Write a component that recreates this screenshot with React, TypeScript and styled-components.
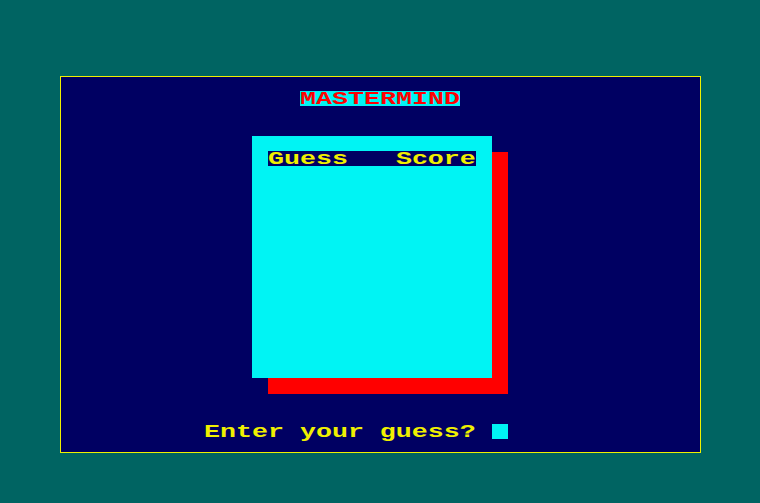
import React from 'react';
import styled, { createGlobalStyle } from 'styled-components';

const GlobalStyle = createGlobalStyle`
  html, body {
    margin: 0;
    padding: 0;
    background-color: #006462;
  }
  body {
    font-family: "Liberation Mono", "DejaVu Sans Mono", monospace;
  }
`;

const Page = styled.div`
  width: 760px;
  height: 503px;
  padding-top: 76px;
  box-sizing: border-box;
  display: flex;
  justify-content: center;
  align-items: flex-start;
`;

const Screen = styled.div`
  width: 641px;
  box-sizing: border-box;
  border: 1px solid #f0f000;
  background-color: #000062;
  display: flex;
  flex-direction: column;
  align-items: flex-start;
  padding: 14px 0 13px 0;
`;

// one row of character cells, 16px wide each
const Cells = styled.span<{ $cols: number; $bg?: string }>`
  display: inline-block;
  width: ${(p) => p.$cols * 16}px;
  height: 15px;
  background-color: ${(p) => p.$bg || 'transparent'};
`;

const Glyphs = styled.span<{ $fg: string }>`
  display: inline-block;
  font-size: 18px;
  line-height: 15px;
  font-weight: bold;
  white-space: pre;
  color: ${(p) => p.$fg};
  transform: scaleX(1.48);
  transform-origin: 0 0;
`;

const Title = styled(Cells)`
  align-self: center;
`;

const Panel = styled.div`
  margin: 30px 0 0 191px;
  width: 240px;
  height: 242px;
  background-color: #00f4f4;
  box-shadow: 16px 16px 0 #ff0000;
  padding: 15px 0 0 16px;
  box-sizing: border-box;
`;

const PromptRow = styled.div`
  margin: 46px 0 0 143px;
  display: flex;
  align-items: center;
`;

const Cursor = styled.span`
  display: inline-block;
  width: 16px;
  height: 15px;
  background-color: #00f4f4;
`;

function Line({ text, fg, bg }: { text: string; fg: string; bg?: string }) {
  return (
    <Cells $cols={text.length} $bg={bg}>
      <Glyphs $fg={fg}>{text}</Glyphs>
    </Cells>
  );
}

export default function App() {
  const title = 'MASTERMIND';
  return (
    <>
      <GlobalStyle />
      <Page>
        <Screen>
          <Title $cols={title.length} $bg="#00f4f4">
            <Glyphs $fg="#ff0000">{title}</Glyphs>
          </Title>
          <Panel>
            <Line text="Guess   Score" fg="#f0f000" bg="#000062" />
          </Panel>
          <PromptRow>
            <Line text="Enter your guess? " fg="#f0f000" />
            <Cursor />
          </PromptRow>
        </Screen>
      </Page>
    </>
  );
}
